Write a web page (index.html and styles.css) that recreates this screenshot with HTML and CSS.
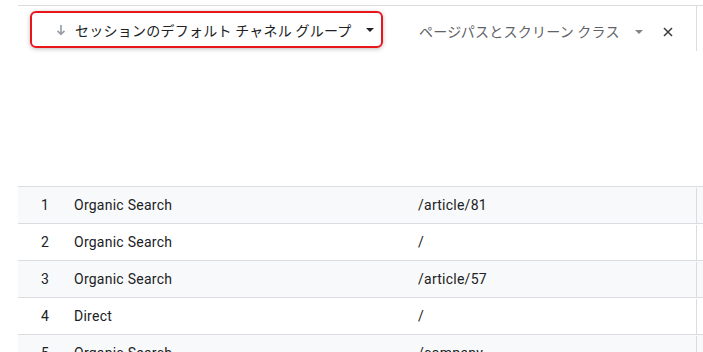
FILE: index.html
```html
<!DOCTYPE html>
<html lang="ja">
<head>
<meta charset="utf-8">
<link rel="stylesheet" href="styles.css">
</head>
<body>
<div class="table">
  <div class="head">
    <div class="hcell hcell-dim">
      <div class="chip">
        <svg class="sort" width="10" height="12" viewBox="0 0 10 12"><path d="M5 1v9M1.5 6.8 5 10.3 8.5 6.8" fill="none" stroke="#9aa0a6" stroke-width="1.7"/></svg>
        <span class="htext">セッションのデフォルト チャネル グループ</span>
        <svg class="caret" width="8" height="4" viewBox="0 0 8 4"><path d="M0 0h8L4 4z" fill="#202124"/></svg>
      </div>
    </div>
    <div class="hcell hcell-page">
      <span class="htext muted">ページパスとスクリーン クラス</span>
      <svg class="caret caret-muted" width="8" height="4" viewBox="0 0 8 4"><path d="M0 0h8L4 4z" fill="#80868b"/></svg>
      <svg class="close" width="10" height="10" viewBox="0 0 10 10"><path d="M1 1l8 8M9 1 1 9" stroke="#3c4043" stroke-width="1.6"/></svg>
    </div>
    <div class="hcell"></div>
  </div>
  <div class="row alt"><div class="c idx">1</div><div class="c">Organic Search</div><div class="c page">/article/81</div><div class="c"></div></div>
  <div class="row"><div class="c idx">2</div><div class="c">Organic Search</div><div class="c page">/</div><div class="c"></div></div>
  <div class="row alt"><div class="c idx">3</div><div class="c">Organic Search</div><div class="c page">/article/57</div><div class="c"></div></div>
  <div class="row"><div class="c idx">4</div><div class="c">Direct</div><div class="c page">/</div><div class="c"></div></div>
  <div class="row alt"><div class="c idx">5</div><div class="c">Organic Search</div><div class="c page">/company</div><div class="c"></div></div>
</div>
</body>
</html>
```
FILE: styles.css
```css
html, body {
  margin: 0;
  padding: 0;
  background: #fff;
  overflow: hidden;
}
body {
  padding-top: 5px;
  font-family: Roboto, "Noto Sans CJK JP", sans-serif;
  font-size: 14px;
  color: #202124;
}
.table {
  margin-left: 18px;
  width: 720px;
}
.head, .row {
  display: grid;
  grid-template-columns: 56px 326px 297px 1fr;
}
.head {
  border-top: 1px solid #dadce0;
  border-bottom: 1px solid #dadce0;
  height: 180px;
}
.hcell-dim {
  grid-column: 1 / 3;
}
.hcell-page {
  border-right: 1px solid #dadce0;
  display: flex;
  align-items: flex-start;
  padding: 15px 0 0 19px;
  height: 30px;
}
.chip {
  margin: 5px 17px 0 12px;
  height: 33px;
  border: 2px solid #e8161b;
  border-radius: 6px;
  box-shadow: 0 1px 4px rgba(60, 64, 67, 0.35);
  display: flex;
  align-items: center;
  padding-left: 24px;
}
.sort {
  margin-right: 9px;
  margin-top: 1px;
}
.htext {
  font-family: "Noto Sans CJK JP", sans-serif;
  font-size: 14px;
  color: #202124;
  line-height: 20px;
  letter-spacing: 0.25px;
}
.htext.muted {
  color: #5f6368;
}
.caret {
  margin-left: 14px;
}
.hcell-page .caret {
  margin-left: 15px;
  margin-top: 9px;
}
.close {
  margin-left: 20px;
  margin-top: 6px;
}
.row {
  height: 36px;
  border-bottom: 1px solid #dadce0;
  align-items: center;
}
.row.alt {
  background: #f8f9fa;
}
.c {
  line-height: 35px;
  white-space: nowrap;
  letter-spacing: 0.25px;
}
.idx {
  text-align: right;
  padding-right: 25px;
}
.page {
  padding-left: 18px;
  border-right: 1px solid #dadce0;
}
```
